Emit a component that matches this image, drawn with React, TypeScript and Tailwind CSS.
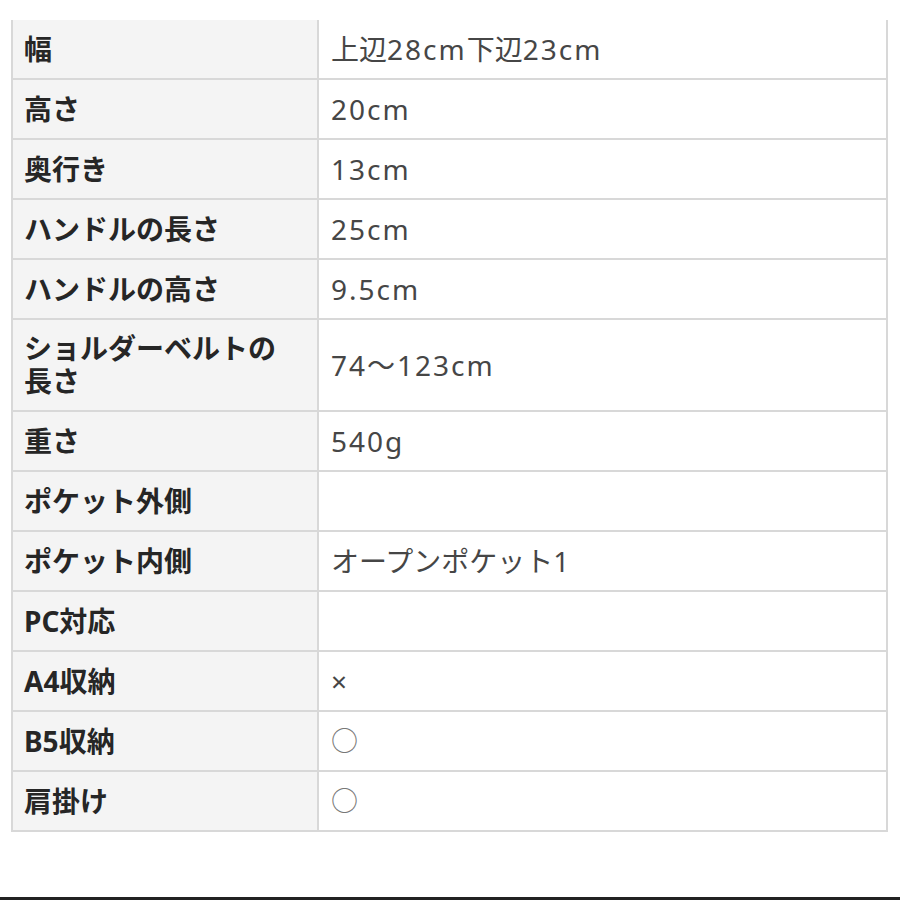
const rows: { label: string[]; value: string }[] = [
  { label: ["幅"], value: "上辺28cm下辺23cm" },
  { label: ["高さ"], value: "20cm" },
  { label: ["奥行き"], value: "13cm" },
  { label: ["ハンドルの長さ"], value: "25cm" },
  { label: ["ハンドルの高さ"], value: "9.5cm" },
  { label: ["ショルダーベルトの", "長さ"], value: "74〜123cm" },
  { label: ["重さ"], value: "540g" },
  { label: ["ポケット外側"], value: "" },
  { label: ["ポケット内側"], value: "オープンポケット1" },
  { label: ["PC対応"], value: "" },
  { label: ["A4収納"], value: "×" },
  { label: ["B5収納"], value: "○" },
  { label: ["肩掛け"], value: "○" },
];

// latin runs get a little tracking so they take the width of the original font
function Value({ text }: { text: string }) {
  if (text === "○") return <span className="text-[27px] text-[#777]">○</span>;
  const parts = text.split(/([0-9A-Za-z.〜]+)/).filter(Boolean);
  return (
    <span>
      {parts.map((p, i) =>
        /[0-9A-Za-z]/.test(p) ? (
          <span key={i} className="tracking-[2px]">
            {p}
          </span>
        ) : (
          <span key={i}>{p}</span>
        )
      )}
    </span>
  );
}

export default function App() {
  return (
    <div className="w-[900px] h-[900px] bg-white flex flex-col font-['Noto_Sans','Noto_Sans_CJK_JP',sans-serif]">
      <div className="ml-[11px] mt-[20px] w-[877px] border-x-2 border-[#d8d8d8]">
        {rows.map((r) => (
          <div
            key={r.label.join("")}
            className={`grid grid-cols-[306px_1fr] border-b-2 border-[#d8d8d8] ${r.label.length > 1 ? "h-[92px]" : "h-[60px]"}`}
          >
            <div className="bg-[#f4f4f4] border-r-2 border-[#d8d8d8] flex flex-col justify-center pl-[11px] pr-2 text-[28px] leading-[34px] font-bold text-[#262626]">
              {r.label.map((l) => (
                <div key={l} className="h-[33px] leading-[33px]">
                  {l}
                </div>
              ))}
            </div>
            <div className="flex items-center pl-[12px] text-[28px] text-[#464646]">
              <Value text={r.value} />
            </div>
          </div>
        ))}
      </div>
      <div className="mt-auto h-[3px] bg-[#222]" />
    </div>
  );
}
